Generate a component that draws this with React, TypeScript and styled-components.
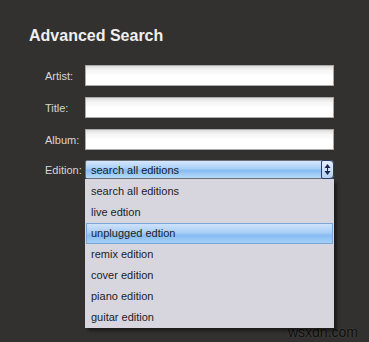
import React from 'react';
import styled, { createGlobalStyle } from 'styled-components';

const GlobalStyle = createGlobalStyle`
  html, body {
    margin: 0;
    padding: 0;
    background: #32312f;
  }
  body {
    font-family: 'Liberation Sans', Arial, sans-serif;
  }
`;

const Page = styled.div`
  position: relative;
  width: 369px;
  height: 342px;
  overflow: hidden;
  background: #32312f;
  padding: 27px 0 0 29px;
  box-sizing: border-box;
`;

const Heading = styled.h1`
  margin: 0;
  font-size: 16px;
  line-height: 18px;
  font-weight: bold;
  color: #efefef;
`;

const Form = styled.div`
  display: flex;
  flex-direction: column;
  gap: 11px;
  margin: 20px 0 0 16px;
`;

const Row = styled.div<{ $compact?: boolean }>`
  display: flex;
  align-items: center;
  height: ${(p) => (p.$compact ? '19px' : '21px')};
  margin-top: ${(p) => (p.$compact ? '-1px' : '0')};
`;

const Label = styled.label`
  width: 40px;
  font-size: 11px;
  color: #d6d6d6;
`;

const TextInput = styled.input`
  box-sizing: border-box;
  width: 249px;
  height: 21px;
  margin: 0;
  padding: 0 4px;
  border: 1px solid #a9a9a9;
  border-radius: 0;
  outline: none;
  background: linear-gradient(#dcdcdc 0px, #f4f4f4 4px, #ffffff 10px);
`;

const SelectWrap = styled.div`
  position: relative;
  width: 249px;
  height: 19px;
`;

const SelectBox = styled.div`
  box-sizing: border-box;
  display: flex;
  align-items: center;
  height: 19px;
  padding-left: 5px;
  border: 1px solid #6b6f78;
  border-radius: 2px 3px 3px 2px;
  background: linear-gradient(#d6e7fb, #a8cff7 45%, #86bdf2 55%, #b6daf9);
  font-size: 11px;
  color: #141a2a;
`;

const SelectText = styled.span`
  flex: 1;
`;

const ArrowButton = styled.div`
  box-sizing: border-box;
  width: 13px;
  height: 19px;
  margin: -1px -1px -1px 0;
  border: 1px solid #2c3a66;
  border-radius: 2px 4px 4px 2px;
  background: linear-gradient(#e4eefc, #b4d2f4);
  display: flex;
  align-items: center;
  justify-content: center;
`;

const List = styled.ul`
  position: absolute;
  top: 19px;
  left: 0;
  width: 249px;
  margin: 0;
  padding: 2px 0 0;
  height: 149px;
  box-sizing: border-box;
  list-style: none;
  background: #d7d6df;
  box-shadow: 3px 3px 3px rgba(0, 0, 0, 0.45);
  z-index: 2;
`;

const Option = styled.li<{ $active?: boolean }>`
  box-sizing: border-box;
  height: 21px;
  line-height: 19px;
  margin: 0 1px;
  padding-left: 4px;
  font-size: 11px;
  color: #1c1c26;
  border: 1px solid ${(p) => (p.$active ? '#7aa6d8' : 'transparent')};
  background: ${(p) =>
    p.$active
      ? 'linear-gradient(#cfe2fa, #a9cef6 45%, #86bdf2 60%, #a5cff8)'
      : 'transparent'};
`;

const Watermark = styled.div`
  position: absolute;
  right: 11px;
  bottom: 2px;
  font-size: 14px;
  color: #0e0e0e;
  text-shadow: 0 0 2px rgba(255, 255, 255, 0.15);
`;

const editions = [
  'search all editions',
  'live edtion',
  'unplugged edtion',
  'remix edition',
  'cover edition',
  'piano edition',
  'guitar edition',
];

const Arrows = () => (
  <svg width="7" height="13" viewBox="0 0 7 13">
    <path d="M3.5 1 L6.5 5 L0.5 5 Z" fill="#1c2650" />
    <path d="M3.5 12 L6.5 8 L0.5 8 Z" fill="#1c2650" />
    <rect x="3" y="4.5" width="1" height="4" fill="#1c2650" />
  </svg>
);

export default function App() {
  return (
    <>
      <GlobalStyle />
      <Page>
        <Heading>Advanced Search</Heading>
        <Form>
          <Row>
            <Label>Artist:</Label>
            <TextInput />
          </Row>
          <Row>
            <Label>Title:</Label>
            <TextInput />
          </Row>
          <Row>
            <Label>Album:</Label>
            <TextInput />
          </Row>
          <Row $compact>
            <Label>Edition:</Label>
            <SelectWrap>
              <SelectBox>
                <SelectText>search all editions</SelectText>
                <ArrowButton>
                  <Arrows />
                </ArrowButton>
              </SelectBox>
              <List>
                {editions.map((e) => (
                  <Option key={e} $active={e === 'unplugged edtion'}>
                    {e}
                  </Option>
                ))}
              </List>
            </SelectWrap>
          </Row>
        </Form>
        <Watermark>wsxdn.com</Watermark>
      </Page>
    </>
  );
}
